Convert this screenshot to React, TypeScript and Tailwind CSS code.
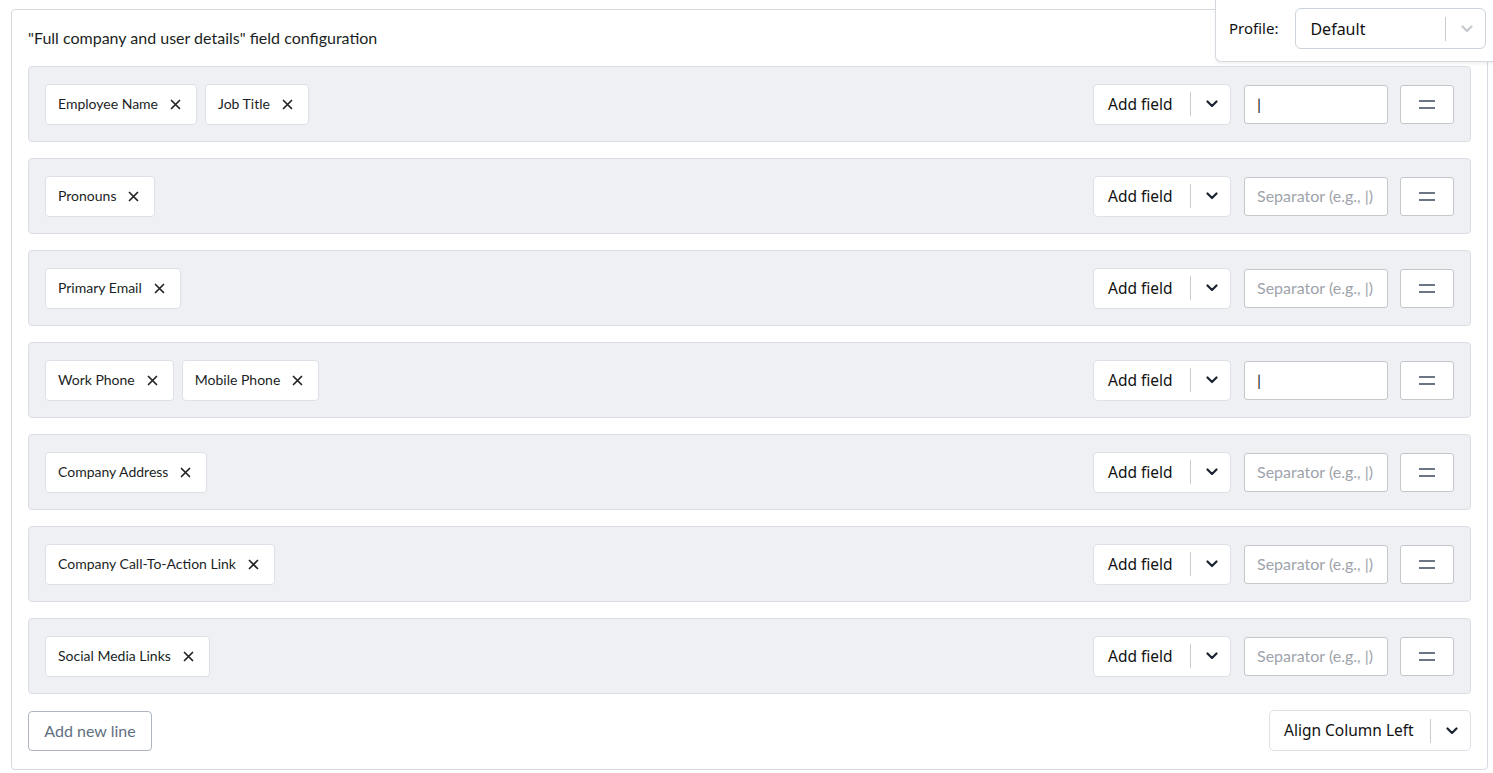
import React from "react";

const rows: { chips: string[]; sep: string }[] = [
  { chips: ["Employee Name", "Job Title"], sep: "|" },
  { chips: ["Pronouns"], sep: "" },
  { chips: ["Primary Email"], sep: "" },
  { chips: ["Work Phone", "Mobile Phone"], sep: "|" },
  { chips: ["Company Address"], sep: "" },
  { chips: ["Company Call-To-Action Link"], sep: "" },
  { chips: ["Social Media Links"], sep: "" },
];

const lato = "font-['Lato','Liberation_Sans',sans-serif]";
const ui = "font-['Noto_Sans','Open_Sans',sans-serif]";

function Chevron({ className }: { className?: string }) {
  return (
    <svg width="12" height="8" viewBox="0 0 12 8" className={className} fill="none">
      <path d="M1.5 1.5 6 6l4.5-4.5" stroke="currentColor" strokeWidth="2.2" strokeLinecap="round" strokeLinejoin="round" />
    </svg>
  );
}

function Chip({ label }: { label: string }) {
  return (
    <div className={`flex h-[41px] items-center gap-[12px] rounded-[4px] border border-[#dde1e7] bg-white pl-[12px] pr-[15px] text-[14px] leading-none text-[#1b1f24] ${lato}`}>
      <span>{label}</span>
      <svg width="11" height="11" viewBox="0 0 11 11" className="text-[#222]">
        <path d="M1.5 1.5l8 8M9.5 1.5l-8 8" stroke="currentColor" strokeWidth="1.7" strokeLinecap="round" />
      </svg>
    </div>
  );
}

function Row({ chips, sep }: { chips: string[]; sep: string }) {
  return (
    <div className="flex h-[76px] items-center justify-between rounded-[4px] border border-[#dadee4] bg-[#eef0f4] px-[16px]">
      <div className="flex items-center gap-[8px]">
        {chips.map((c) => (
          <Chip key={c} label={c} />
        ))}
      </div>
      <div className="flex items-center">
        <div className={`flex h-[41px] w-[138px] items-center rounded-[5px] border border-[#dde1e7] bg-white text-[15.5px] text-[#111] ${ui}`}>
          <span className="w-[96px] pl-[14px] pt-px">Add field</span>
          <span className="h-[24px] w-px bg-[#c8ccd1]" />
          <Chevron className="ml-[15px] text-[#1b2230]" />
        </div>
        <div className={`ml-[13px] flex h-[39px] w-[144px] items-center rounded-[3px] border border-[#c3c7cc] bg-white px-[12px] text-[16px] ${lato}`}>
          {sep ? (
            <span className="text-[#1b1f24]">{sep}</span>
          ) : (
            <span className="text-[#9ea4ab]">Separator (e.g., |)</span>
          )}
        </div>
        <div className="ml-[12px] flex h-[39px] w-[54px] items-center justify-center rounded-[3px] border border-[#c3c7cc] bg-white">
          <svg width="16" height="9" viewBox="0 0 16 9">
            <path d="M0 1h16M0 8h16" stroke="#6b7585" strokeWidth="2" />
          </svg>
        </div>
      </div>
    </div>
  );
}

export default function App() {
  return (
    <main className="relative min-h-[773px] bg-white pl-[11px] pt-[9px]">
      <div className="w-[1477px] rounded-[4px] border border-[#d5dae0] bg-white px-[16px] pb-[18px] pt-[18px]">
        <h1 className={`mb-[18px] h-[20px] text-[16px] leading-[20px] text-[#1b1f24] ${lato}`}>
          "Full company and user details" field configuration
        </h1>
        <div className="flex flex-col gap-[16px]">
          {rows.map((r, i) => (
            <Row key={i} chips={r.chips} sep={r.sep} />
          ))}
        </div>
        <div className="mt-[16px] flex items-center justify-between">
          <button className={`h-[40px] w-[124px] rounded-[4px] border border-[#aeb5bf] bg-white text-[16px] text-[#5f6f82] ${lato}`}>
            Add new line
          </button>
          <div className={`flex h-[41px] w-[202px] items-center rounded-[5px] border border-[#dde1e7] bg-white text-[15.5px] text-[#111] ${ui}`}>
            <span className="w-[160px] pl-[14px] pt-px">Align Column Left</span>
            <span className="h-[24px] w-px bg-[#c8ccd1]" />
            <Chevron className="ml-[15px] text-[#1b2230]" />
          </div>
        </div>
      </div>

      <div className={`absolute left-[1215px] top-0 flex h-[62px] w-[290px] items-center rounded-bl-[6px] border-b border-l border-[#d5dae0] bg-white pb-[4px] pl-[13px] shadow-[0_2px_3px_rgba(0,0,0,0.06)] ${ui}`}>
        <span className="mr-[17px] text-[15px] text-[#111]">Profile:</span>
        <div className="flex h-[41px] w-[191px] items-center rounded-[6px] border border-[#ccd3db] bg-white text-[16px] text-[#111]">
          <span className="w-[149px] pl-[14px]">Default</span>
          <span className="h-[24px] w-px bg-[#c8ccd1]" />
          <Chevron className="ml-[15px] text-[#c4c9cf]" />
        </div>
      </div>
    </main>
  );
}
